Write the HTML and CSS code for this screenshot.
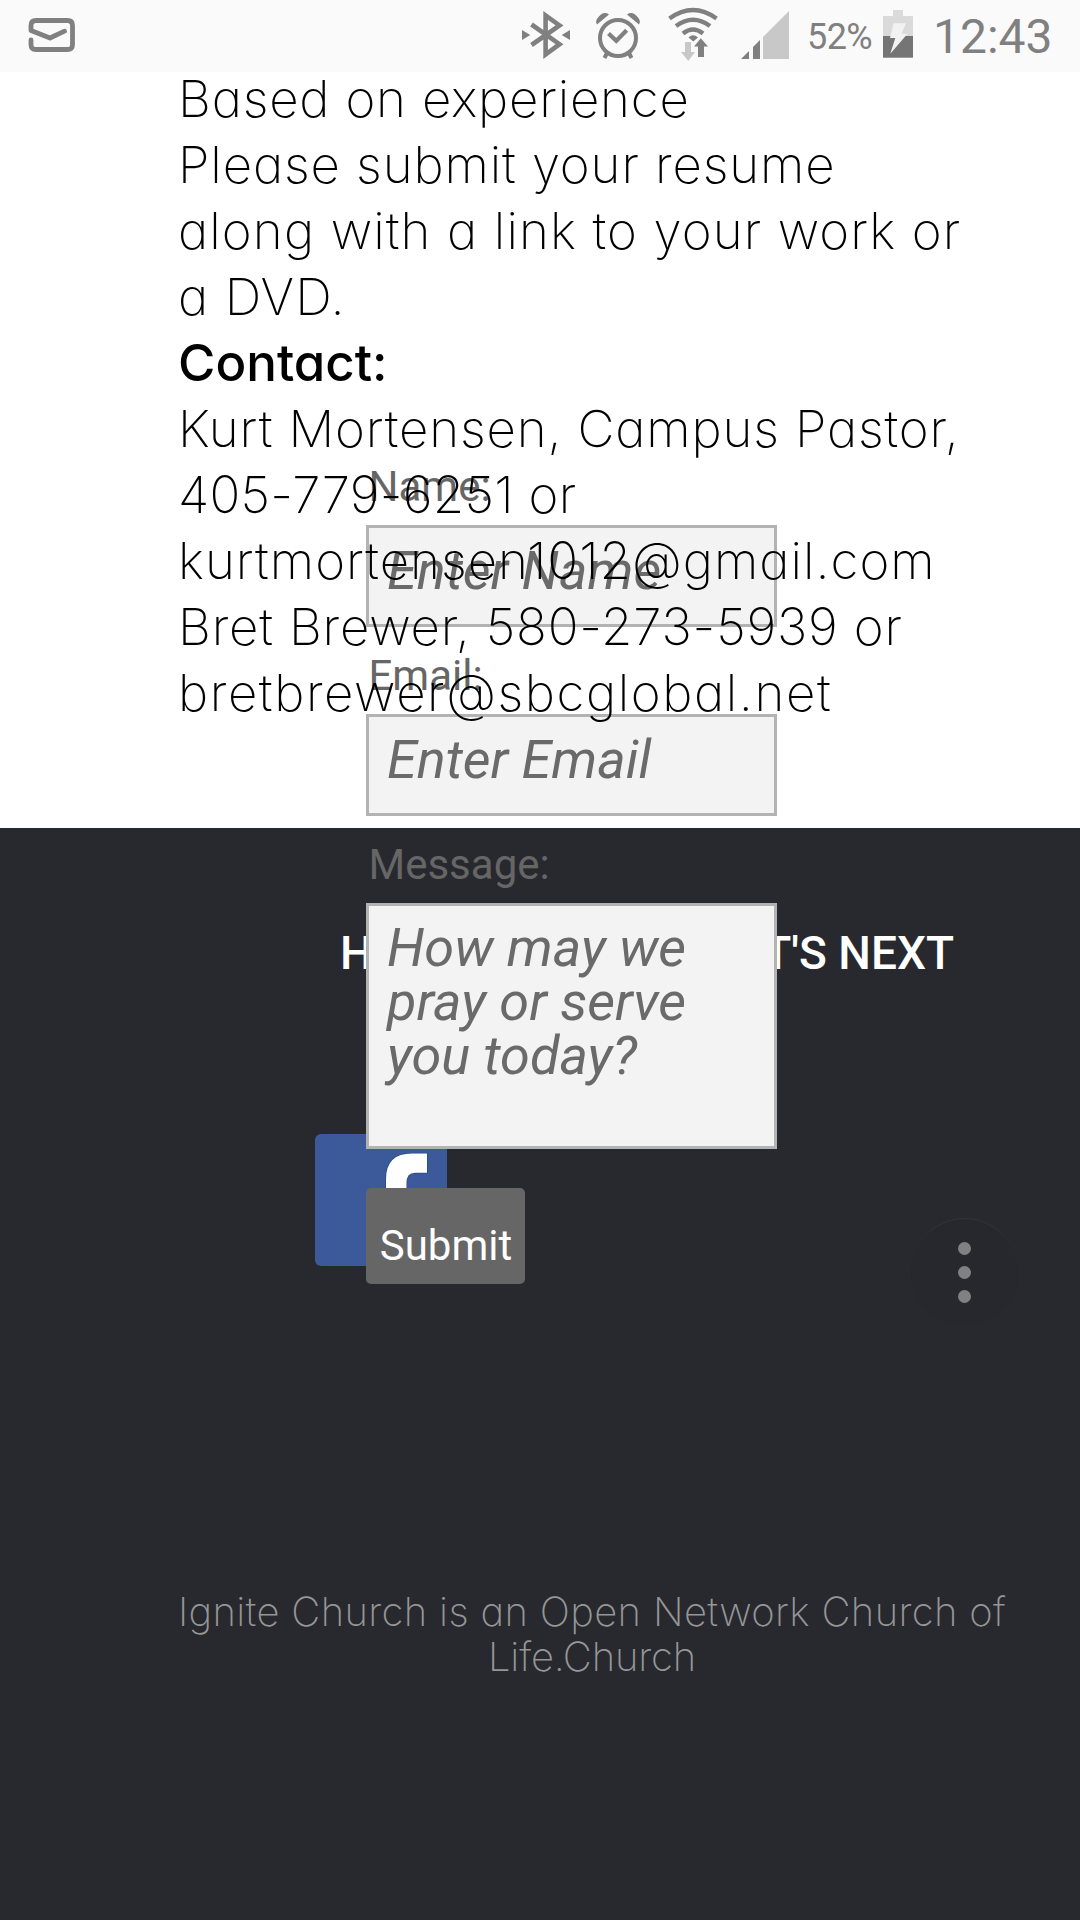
FILE: index.html
```html
<!DOCTYPE html>
<html lang="en">
<head>
<meta charset="utf-8">
<title>Ignite Church</title>
<link rel="stylesheet" href="styles.css">
</head>
<body>
<div class="status">
  <svg class="icon mail" width="50" height="72" viewBox="27 0 50 72" fill="none" stroke="#808080" stroke-width="4.8" stroke-linecap="round" stroke-linejoin="round"><path d="M31 40V44.500Q31 49.500 36 49.500H67.500Q72.500 49.500 72.500 44.500V25.500Q72.500 20.500 67.500 20.500H36Q31 20.500 31 25.500V30.500L50 38L64.500 31.200"/></svg>
  <svg class="icon" width="50" height="72" viewBox="521 0 50 72"><path d="M531.500 24.500L559.500 44.200L545.600 54.500V15.500L559.500 25.500L531.500 45" fill="none" stroke="#808080" stroke-width="4.600"/><path d="M522 30L530.300 35L522 40ZM570 30L561.700 35L570 40Z" fill="#808080"/></svg>
  <svg class="icon" width="46" height="72" viewBox="595 0 46 72" fill="none" stroke="#808080"><circle cx="618" cy="38" r="18" stroke-width="4"/><path d="M608.500 33.500L616.300 40.800L626.700 30.300" stroke-width="4.200"/><path d="M608 51L604.500 58M628 51L631.500 58" stroke-width="4"/><path d="M597 24.500C595.500 22 596 20 598 17.500C601 13.500 605 11.500 609 14.500ZM639 24.500C640.500 22 640 20 638 17.500C635 13.500 631 11.500 627 14.500Z" fill="#808080" stroke="none"/></svg>
  <svg class="icon" width="52" height="72" viewBox="667 0 52 72"><path d="M669.500 18.500Q693 1.500 716.500 18.500M676 26Q693 13.500 710 26M683 33.500Q693 25.500 703 33.500" fill="none" stroke="#808080" stroke-width="4.400"/><path d="M688.500 37.500Q693 33 698 37.500L693.300 41.500Z" fill="#808080"/><path d="M685 42H691V52H695L688.300 61L681 52H685Z" fill="#c8c8c8"/><path d="M700.800 38.300L708 46.500H704V57H698V46.500H694Z" fill="#808080"/></svg>
  <svg class="icon" width="50" height="72" viewBox="740 0 50 72"><path d="M741 59L749 51V59ZM753 47L760 40V59H753Z" fill="#808080"/><path d="M763 37L789 11V59H763Z" fill="#c8c8c8"/></svg>
  <span class="charge">52%</span>
  <svg class="icon" width="30" height="72" viewBox="883 0 30 72"><path d="M893 10H903V16H913V37H883V16H893Z" fill="#dadada"/><path d="M883 36H913V57.700H883Z" fill="#757575"/><path d="M893.500 23.200H906L901.500 33.800H907.500L890.300 53.700L895.300 38H890Z" fill="#f2f2f2"/></svg>
  <time class="clock">12:43</time>
</div>

<main class="post">
  <p class="copy">
    <span class="line l1">Based on experience</span>
    <span class="line l2">Please submit your resume</span>
    <span class="line l3">along with a link to your work or</span>
    <span class="line l4">a DVD.</span>
    <strong class="line">Contact:</strong>
    <span class="line l6">Kurt Mortensen, Campus Pastor,</span>
    <span class="line l7">405-779-6251 or</span>
    <span class="line l8">kurtmortensen1012@gmail.com</span>
    <span class="line l9">Bret Brewer, 580-273-5939 or</span>
    <span class="line l10">bretbrewer@sbcglobal.net</span>
  </p>
</main>

<footer class="footer">
  <nav class="nav"><a>HOME</a><a>WHAT'S NEXT</a></nav>
  <svg class="facebook" width="132" height="132" viewBox="0 0 132 132"><rect width="132" height="132" rx="6" fill="#3c5a99"/><path d="M91.500 132V80H109L111.500 60H91.500V49Q91.500 38.700 100 38.700H112V19.500H97Q71 19.500 71 45V60H54V80H71V132Z" fill="#fff" stroke="#264a8c" stroke-width="1.500" paint-order="stroke"/></svg>
  <p class="network"><span class="line n1">Ignite Church is an Open Network Church of</span><span class="line n2">Life.Church</span></p>
</footer>

<form class="form">
  <label class="label" for="name">Name:</label>
  <input class="field" id="name" placeholder="Enter Name">
  <label class="label" for="email">Email:</label>
  <input class="field" id="email" placeholder="Enter Email">
  <label class="label" for="message">Message:</label>
  <textarea class="field area" id="message" placeholder="How may we pray or serve you today?"></textarea>
  <button class="submit" type="button">Submit</button>
</form>

<div class="more"><i></i><i></i><i></i></div>
</body>
</html>
```
FILE: styles.css
```css
* { box-sizing: border-box; }
body {
  margin: 0;
  position: relative;
  height: 1920px;
  overflow: hidden;
  display: flex;
  flex-direction: column;
  background: #fff;
  font-family: Roboto, sans-serif;
}
p { margin: 0; }
.status {
  height: 72px;
  flex: none;
  display: flex;
  align-items: center;
  padding: 0 27px;
  background: #fafafa;
  color: #808080;
}
.icon { flex: none; margin-right: 22px; }
.icon.mail { margin-right: 444px; }
.icon:nth-child(2) { margin-right: 24px; }
.icon:nth-child(3) { margin-right: 26px; }
.icon:nth-child(4) { margin-right: 21px; }
.icon:nth-child(5) { margin-right: 17px; }
.icon:nth-child(7) { margin-right: 20px; }
.charge { flex: none; font-size: 36px; line-height: 42px; width: 76px; padding-top: 2px; letter-spacing: -0.6px; }
.clock { font-size: 48px; line-height: 56px; padding-top: 1px; white-space: nowrap; }

.post {
  height: 756px;
  flex: none;
  padding-left: 178px;
}
.copy {
  position: relative;
  z-index: 2;
  margin-top: -6px;
  font: 200 51px/66px Inter, sans-serif;
  font-feature-settings: "cv11" 1;
  color: #000;
}
.line { display: block; white-space: nowrap; }
strong.line { font-weight: 500; }
.l1 { letter-spacing: 0.8px; }
.l2 { letter-spacing: 0.88px; }
.l3 { letter-spacing: 1.12px; }
.l4 { letter-spacing: 1.1px; }
.l6 { letter-spacing: 0.83px; }
.l7 { letter-spacing: 0.28px; }
.l8 { letter-spacing: 1px; }
.l9 { letter-spacing: 0.8px; }
.l10 { letter-spacing: 1.58px; }

.footer {
  flex: 1;
  background: #28292e;
  padding-top: 98px;
  display: flex;
  flex-direction: column;
}
.nav {
  display: flex;
  justify-content: space-between;
  margin: 0 126px 154px 340px;
  font: 500 46px/54px Roboto, sans-serif;
  color: #fff;
}
.facebook { flex: none; margin: 0 0 323px 315px; }
.network {
  width: 828px;
  margin-left: 178px;
  text-align: center;
  font: 200 40px/45px Inter, sans-serif;
  font-feature-settings: "cv11" 1;
  color: #959696;
}
.n1 { letter-spacing: 0.32px; }
.n2 { letter-spacing: -0.2px; }

/* contact form floating over the page */
.form {
  position: absolute;
  z-index: 1;
  left: 366px;
  top: 462px;
  width: 411px;
  display: flex;
  flex-direction: column;
  align-items: flex-start;
}
.label {
  font-size: 42px;
  line-height: 49px;
  margin: 0 0 14px 2.5px;
  color: #666;
}
.field {
  display: block;
  width: 411px;
  height: 102px;
  margin: 0 0 24px;
  padding: 11px 18px 23px;
  border: 3px solid #b3b3b3;
  border-radius: 0;
  outline: 0;
  background: #f3f3f3;
  font: italic 400 54px/62px Roboto, sans-serif;
}
.field::placeholder { color: #6a6a6a; opacity: 1; }
.area {
  height: 246px;
  margin-bottom: 39px;
  padding: 15px 18px;
  line-height: 54px;
  resize: none;
  overflow: hidden;
}
.submit {
  width: 159px;
  height: 96px;
  padding: 33px 0 14px 1px;
  border: 0;
  border-radius: 5px;
  background: #666;
  color: #fff;
  font: 400 42px/49px Roboto, sans-serif;
}

/* floating menu button */
.more {
  position: absolute;
  left: 911px;
  top: 1218px;
  width: 107px;
  height: 108px;
  border-radius: 50%;
  background: #27282d;
  box-shadow: inset 0 2px 1px -1px #34353a;
  display: flex;
  flex-direction: column;
  align-items: center;
  justify-content: center;
  gap: 11px;
}
.more i { width: 13px; height: 13px; border-radius: 50%; background: #808185; }
```
